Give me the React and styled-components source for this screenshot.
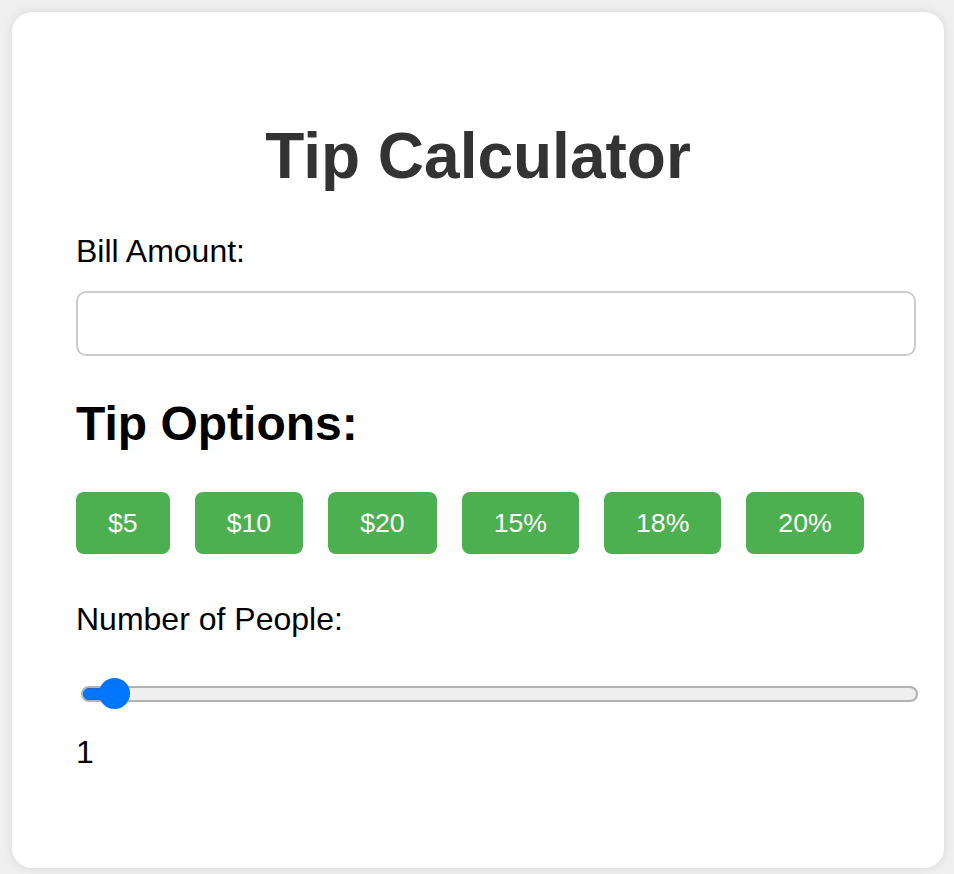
import React, { useState } from "react";
import styled, { createGlobalStyle } from "styled-components";

const GlobalStyle = createGlobalStyle`
  html, body {
    margin: 0;
    padding: 0;
    background: #f0f0f0;
    font-family: "Liberation Sans", Arial, Helvetica, sans-serif;
  }
  * { box-sizing: border-box; }
`;

const Page = styled.div`
  padding: 12px 10px 6px 12px;
`;

const Card = styled.div`
  width: 932px;
  background: #ffffff;
  border-radius: 20px;
  box-shadow: 0 0 12px rgba(0, 0, 0, 0.1);
  padding: 107px 0 97px 0;
`;

const Title = styled.h1`
  margin: 0;
  font-size: 64px;
  line-height: 74px;
  font-weight: 700;
  color: #333333;
  text-align: center;
`;

const Form = styled.div`
  display: flex;
  flex-direction: column;
  padding: 0 26px 0 64px;
`;

const Label = styled.label`
  display: block;
  font-size: 32px;
  line-height: 37px;
  color: #000;
  margin-top: ${(p) => p.$top}px;
`;

const AmountInput = styled.input`
  display: block;
  width: 840px;
  height: 65px;
  margin-top: 21px;
  border: 2px solid #cccccc;
  border-radius: 10px;
  padding: 0 16px;
  font-size: 32px;
  font-family: inherit;
  outline: none;
  background: #fff;
`;

const SectionTitle = styled.h2`
  margin: 40px 0 0 0;
  font-size: 48px;
  line-height: 55px;
  font-weight: 700;
  color: #000;
`;

const ButtonRow = styled.div`
  display: flex;
  gap: 25px;
  margin-top: 41px;
`;

const TipButton = styled.button`
  height: 62px;
  padding: 0 32px;
  border: none;
  border-radius: 8px;
  background: #4caf50;
  color: #ffffff;
  font-family: inherit;
  font-size: 26.67px;
  cursor: pointer;
`;

const Slider = styled.div`
  position: relative;
  width: 842px;
  height: 32px;
  margin-top: 40px;
  display: flex;
  align-items: center;
`;

const Track = styled.div`
  margin-left: 5px;
  width: 837px;
  height: 16px;
  border: 2px solid #b2b2b2;
  border-radius: 8px;
  background: #efefef;
  overflow: hidden;
  display: flex;
`;

const Fill = styled.div`
  height: 100%;
  background: #0075ff;
  border-right: none;
  box-shadow: inset 0 0 0 1px #2d63b8;
`;

const Thumb = styled.div`
  position: absolute;
  top: 0;
  width: 31px;
  height: 31px;
  border-radius: 50%;
  background: #0075ff;
`;

const Value = styled.div`
  font-size: 32px;
  line-height: 37px;
  color: #000;
  margin-top: 24px;
`;

const options = ["$5", "$10", "$20", "15%", "18%", "20%"];

export default function App() {
  const [amount, setAmount] = useState("");
  const people = 1;
  const thumbLeft = 23;

  return (
    <>
      <GlobalStyle />
      <Page>
        <Card>
          <Title>Tip Calculator</Title>
          <Form>
            <Label $top={40} htmlFor="bill">Bill Amount:</Label>
            <AmountInput
              id="bill"
              type="text"
              value={amount}
              onChange={(e) => setAmount(e.target.value)}
            />
            <SectionTitle>Tip Options:</SectionTitle>
            <ButtonRow>
              {options.map((o) => (
                <TipButton key={o}>{o}</TipButton>
              ))}
            </ButtonRow>
            <Label $top={47}>Number of People:</Label>
            <Slider>
              <Track>
                <Fill style={{ width: `${thumbLeft + 12}px` }} />
              </Track>
              <Thumb style={{ left: `${thumbLeft}px` }} />
            </Slider>
            <Value>{people}</Value>
          </Form>
        </Card>
      </Page>
    </>
  );
}
